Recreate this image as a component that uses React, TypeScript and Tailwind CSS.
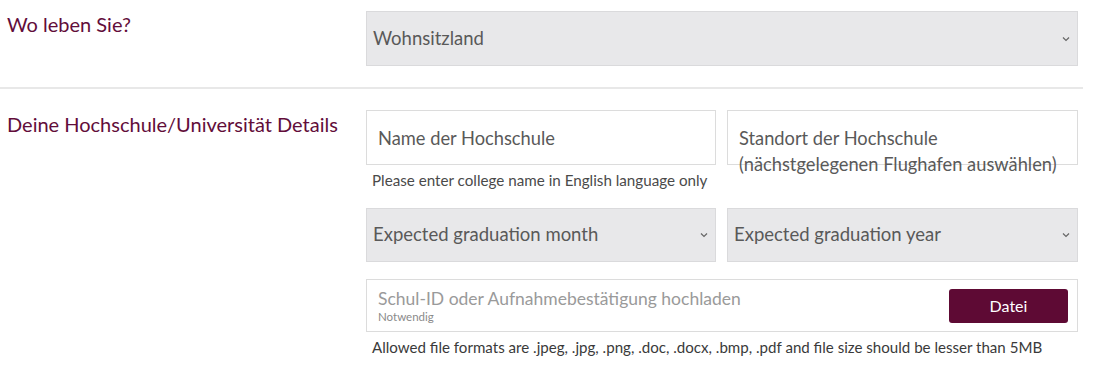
import React from 'react';

function Chevron() {
  return (
    <svg width="8" height="6" viewBox="0 0 8 6" className="shrink-0">
      <path d="M1 1.5l3 3 3-3" fill="none" stroke="#666" strokeWidth="1.2" />
    </svg>
  );
}

function SelectBox({ label }: { label: string }) {
  return (
    <div className="flex items-center justify-between h-full bg-[#e8e8ea] border border-[#dadadc] pl-[6px] pr-[7px]">
      <span className="text-[18.5px] text-[#595959]">{label}</span>
      <Chevron />
    </div>
  );
}

export default function App() {
  return (
    <div className="w-[1100px] h-[368px] bg-white font-['Lato',_sans-serif] overflow-hidden">
      {/* Wohnort */}
      <div className="flex pt-[11px] pb-[21px]">
        <div className="w-[366px] pl-[7px] pt-[1px] text-[20px] leading-[24px] text-[#620d3a]">
          Wo leben Sie?
        </div>
        <div className="w-[712px] h-[55px]">
          <SelectBox label="Wohnsitzland" />
        </div>
      </div>

      <div className="h-[2px] w-[1083px] bg-[#e8e8e8]" />

      {/* Hochschule */}
      <div className="flex pt-[21px]">
        <div className="w-[366px] pl-[7px] pt-[2px] text-[20px] leading-[24px] text-[#620d3a]">
          Deine Hochschule/Universität Details
        </div>
        <div className="w-[712px] flex flex-col">
          <div className="grid grid-cols-[350px_351px] gap-[11px]">
            <div>
              <div className="h-[55px] border border-[#dcdcdc] px-[11px] pt-[14px] text-[18.3px] leading-[26px] text-[#595959]">
                Name der Hochschule
              </div>
              <div className="mt-[5px] pl-[6px] text-[15.2px] leading-[20px] text-[#4a4a4a]">
                Please enter college name in English language only
              </div>
            </div>
            <div>
              <div className="h-[55px] border border-[#dcdcdc] px-[11px] pt-[14px] text-[18.3px] leading-[26px] text-[#595959] overflow-visible">
                Standort der Hochschule
                <br />
                (nächstgelegenen Flughafen auswählen)
              </div>
            </div>
          </div>

          <div className="grid grid-cols-[350px_351px] gap-[11px] mt-[18px] h-[54px]">
            <SelectBox label="Expected graduation month" />
            <SelectBox label="Expected graduation year" />
          </div>

          <div className="mt-[17px] h-[53px] border border-[#dcdcdc] flex items-center justify-between pl-[11px] pr-[9px]">
            <div className="flex flex-col">
              <span className="text-[17.5px] leading-[22px] text-[#9a9a9a]">
                Schul-ID oder Aufnahmebestätigung hochladen
              </span>
              <span className="text-[11.5px] leading-[14px] text-[#8a8a8a]">Notwendig</span>
            </div>
            <button className="w-[119px] h-[34px] rounded-[3px] bg-[#5e0a34] text-white text-[16px]">
              Datei
            </button>
          </div>

          <div className="mt-[5px] pl-[6px] text-[15.1px] leading-[20px] text-[#3a3a3a]">
            Allowed file formats are .jpeg, .jpg, .png, .doc, .docx, .bmp, .pdf and file size should be lesser than 5MB
          </div>
        </div>
      </div>
    </div>
  );
}
